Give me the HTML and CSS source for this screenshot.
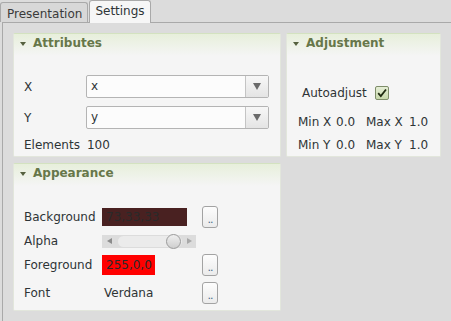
FILE: index.html
```html
<!DOCTYPE html>
<html>
<head>
<meta charset="utf-8">
<link rel="stylesheet" href="styles.css">
</head>
<body>
<div class="tabs">
  <div class="tab">Presentation</div>
  <div class="tab active">Settings</div>
</div>
<div class="pane">
  <div class="grid">
    <section class="group attributes">
      <div class="ghead"><span class="tri"></span>Attributes</div>
      <div class="gbody">
        <div class="row combo-row">
          <span class="lbl">X</span>
          <div class="combo"><span class="cval">x</span><span class="cbtn"><span class="carrow"></span></span></div>
        </div>
        <div class="row combo-row">
          <span class="lbl">Y</span>
          <div class="combo"><span class="cval">y</span><span class="cbtn"><span class="carrow"></span></span></div>
        </div>
        <div class="row elements"><span class="elbl">Elements</span><span>100</span></div>
      </div>
    </section>
    <section class="group adjustment">
      <div class="ghead"><span class="tri"></span>Adjustment</div>
      <div class="gbody adj">
        <div class="auto"><span>Autoadjust</span>
          <span class="check"><svg width="12" height="12" viewBox="0 0 12 12"><path d="M2.2 6.2 L4.8 9 L10 2.5" fill="none" stroke="#1f2a10" stroke-width="1.8"/></svg></span>
        </div>
        <div class="minmax">
          <span>Min X</span><span>0.0</span><span>Max X</span><span>1.0</span>
          <span>Min Y</span><span>0.0</span><span>Max Y</span><span>1.0</span>
        </div>
      </div>
    </section>
    <section class="group appearance">
      <div class="ghead"><span class="tri"></span>Appearance</div>
      <div class="gbody app">
        <div class="arow r1">
          <span class="alabel">Background</span>
          <span class="swatch bgsw">73,33,33</span>
          <span class="dots">..</span>
        </div>
        <div class="arow r2">
          <span class="alabel">Alpha</span>
          <div class="slider">
            <span class="sarr left"></span>
            <span class="track"></span>
            <span class="thumb"></span>
            <span class="sarr right"></span>
          </div>
        </div>
        <div class="arow r3">
          <span class="alabel">Foreground</span>
          <span class="swatch fgsw">255,0,0</span>
          <span class="dots">..</span>
        </div>
        <div class="arow r4">
          <span class="alabel">Font</span>
          <span class="fontval">Verdana</span>
          <span class="dots">..</span>
        </div>
      </div>
    </section>
  </div>
</div>
</body>
</html>
```
FILE: styles.css
```css
* { box-sizing: border-box; }
html, body { margin: 0; padding: 0; }
body {
  width: 451px;
  height: 321px;
  overflow: hidden;
  background: #dcdcdc;
  font-family: "DejaVu Sans", sans-serif;
  font-size: 12px;
  color: #2e3436;
}
.tabs {
  display: flex;
  align-items: flex-end;
  height: 22px;
  position: relative;
  z-index: 1;
}
.tab {
  height: 20px;
  padding: 3px 5px 0 6px;
  background: #d8d8d8;
  border: 1px solid #a9a9a9;
  border-bottom: none;
  border-radius: 3px 3px 0 0;
  color: #3a3a3a;
  line-height: 16px;
}
.tab.active {
  height: 23px;
  margin-left: 1px;
  margin-bottom: -1px;
  padding: 2px 5px 0 5px;
  background: #f6f6f6;
  color: #2e3436;
}
.pane {
  margin-left: 2px;
  height: 299px;
  border-top: 1px solid #a9a9a9;
  border-left: 1px solid #a9a9a9;
  background: #dcdcdc;
  padding: 10px 0 0 10px;
}
.grid {
  display: grid;
  grid-template-columns: 268px 155px;
  grid-template-rows: 124px 148px;
  column-gap: 5px;
  row-gap: 6px;
}
.group {
  background: #f5f5f5;
  border: 1px solid #e2e6dc;
  border-top-color: #d3e2c0;
  border-radius: 2px;
  display: flex;
  flex-direction: column;
}
.appearance { grid-column: 1; grid-row: 2; }
.ghead {
  height: 22px;
  background: linear-gradient(#e7efdb, #f5f5f5);
  font-weight: bold;
  color: #67774a;
  display: flex;
  align-items: center;
  padding-left: 6px;
  padding-bottom: 4px;
}
.tri {
  width: 0; height: 0;
  border-left: 3.5px solid transparent;
  border-right: 3.5px solid transparent;
  border-top: 4px solid #56603f;
  margin-right: 7px;
  margin-top: 1px;
}
.gbody { padding: 19px 0 0 10px; }
.row { display: flex; align-items: center; }
.combo-row { height: 23px; margin-bottom: 8px; }
.lbl { width: 62px; }
.combo {
  width: 183px;
  height: 23px;
  display: flex;
  background: #fcfcfc;
  border: 1px solid #b4b4b4;
  border-radius: 2px;
}
.cval { flex: 1; padding-left: 4px; line-height: 20px; }
.cbtn {
  width: 23px;
  border-left: 1px solid #c4c4c4;
  background: linear-gradient(#f7f7f7, #e4e4e4);
  display: flex;
  align-items: center;
  justify-content: center;
}
.carrow {
  width: 0; height: 0;
  border-left: 4px solid transparent;
  border-right: 4px solid transparent;
  border-top: 7px solid #6a6a6a;
}
.elements { height: 16px; margin-top: 1px; }
.elbl { margin-right: 7px; }
.adj { padding: 0; }
.auto {
  display: flex;
  align-items: center;
  height: 16px;
  margin: 29px 0 0 15px;
}
.check {
  width: 14px; height: 14px;
  margin-left: 8px;
  border: 1px solid #7e8d69;
  border-radius: 2px;
  background: linear-gradient(#e5eed6, #c7d8ab);
  display: flex;
  align-items: center;
  justify-content: center;
}
.minmax {
  display: grid;
  grid-template-columns: 38px 30px 43px auto;
  grid-auto-rows: 23px;
  align-items: center;
  margin: 9px 0 0 11px;
}
.app { padding: 20px 0 0 10px; }
.arow { display: flex; align-items: center; }
.alabel { width: 78px; }
.r1 { height: 22px; }
.r2 { height: 26px; }
.r3 { height: 22px; }
.r4 { height: 22px; margin-top: 6px; }
.swatch {
  height: 18px;
  line-height: 18px;
  padding-left: 4px;
  color: #2a2a2a;
}
.bgsw { width: 85px; background: #492121; margin-right: 15px; }
.fgsw { width: 53px; height: 20px; line-height: 20px; background: #ff0000; margin-right: 47px; }
.fontval { width: 100px; padding-left: 2px; }
.dots {
  width: 16px;
  height: 22px;
  border: 1px solid #a3a3a3;
  border-radius: 3px;
  background: linear-gradient(#fdfdfd, #ebebeb);
  color: #4a6a8a;
  font-size: 11px;
  text-align: center;
  line-height: 26px;
  letter-spacing: -1px;
}
.slider {
  width: 94px;
  height: 13px;
  background: #dcdcdc;
  position: relative;
}
.sarr {
  position: absolute;
  top: 3px;
  width: 0; height: 0;
  border-top: 3.5px solid transparent;
  border-bottom: 3.5px solid transparent;
}
.sarr.left { left: 5px; border-right: 5px solid #8c8c8c; }
.sarr.right { right: 4px; border-left: 5px solid #a8a8a8; }
.track {
  position: absolute;
  left: 16px;
  top: 1px;
  width: 64px;
  height: 11px;
  border-radius: 6px;
  background: #ebebeb;
}
.thumb {
  position: absolute;
  left: 64px;
  top: -1px;
  width: 15px;
  height: 15px;
  border-radius: 50%;
  border: 1px solid #9a9a9a;
  background: linear-gradient(#efefef, #cfcfcf);
}
```
